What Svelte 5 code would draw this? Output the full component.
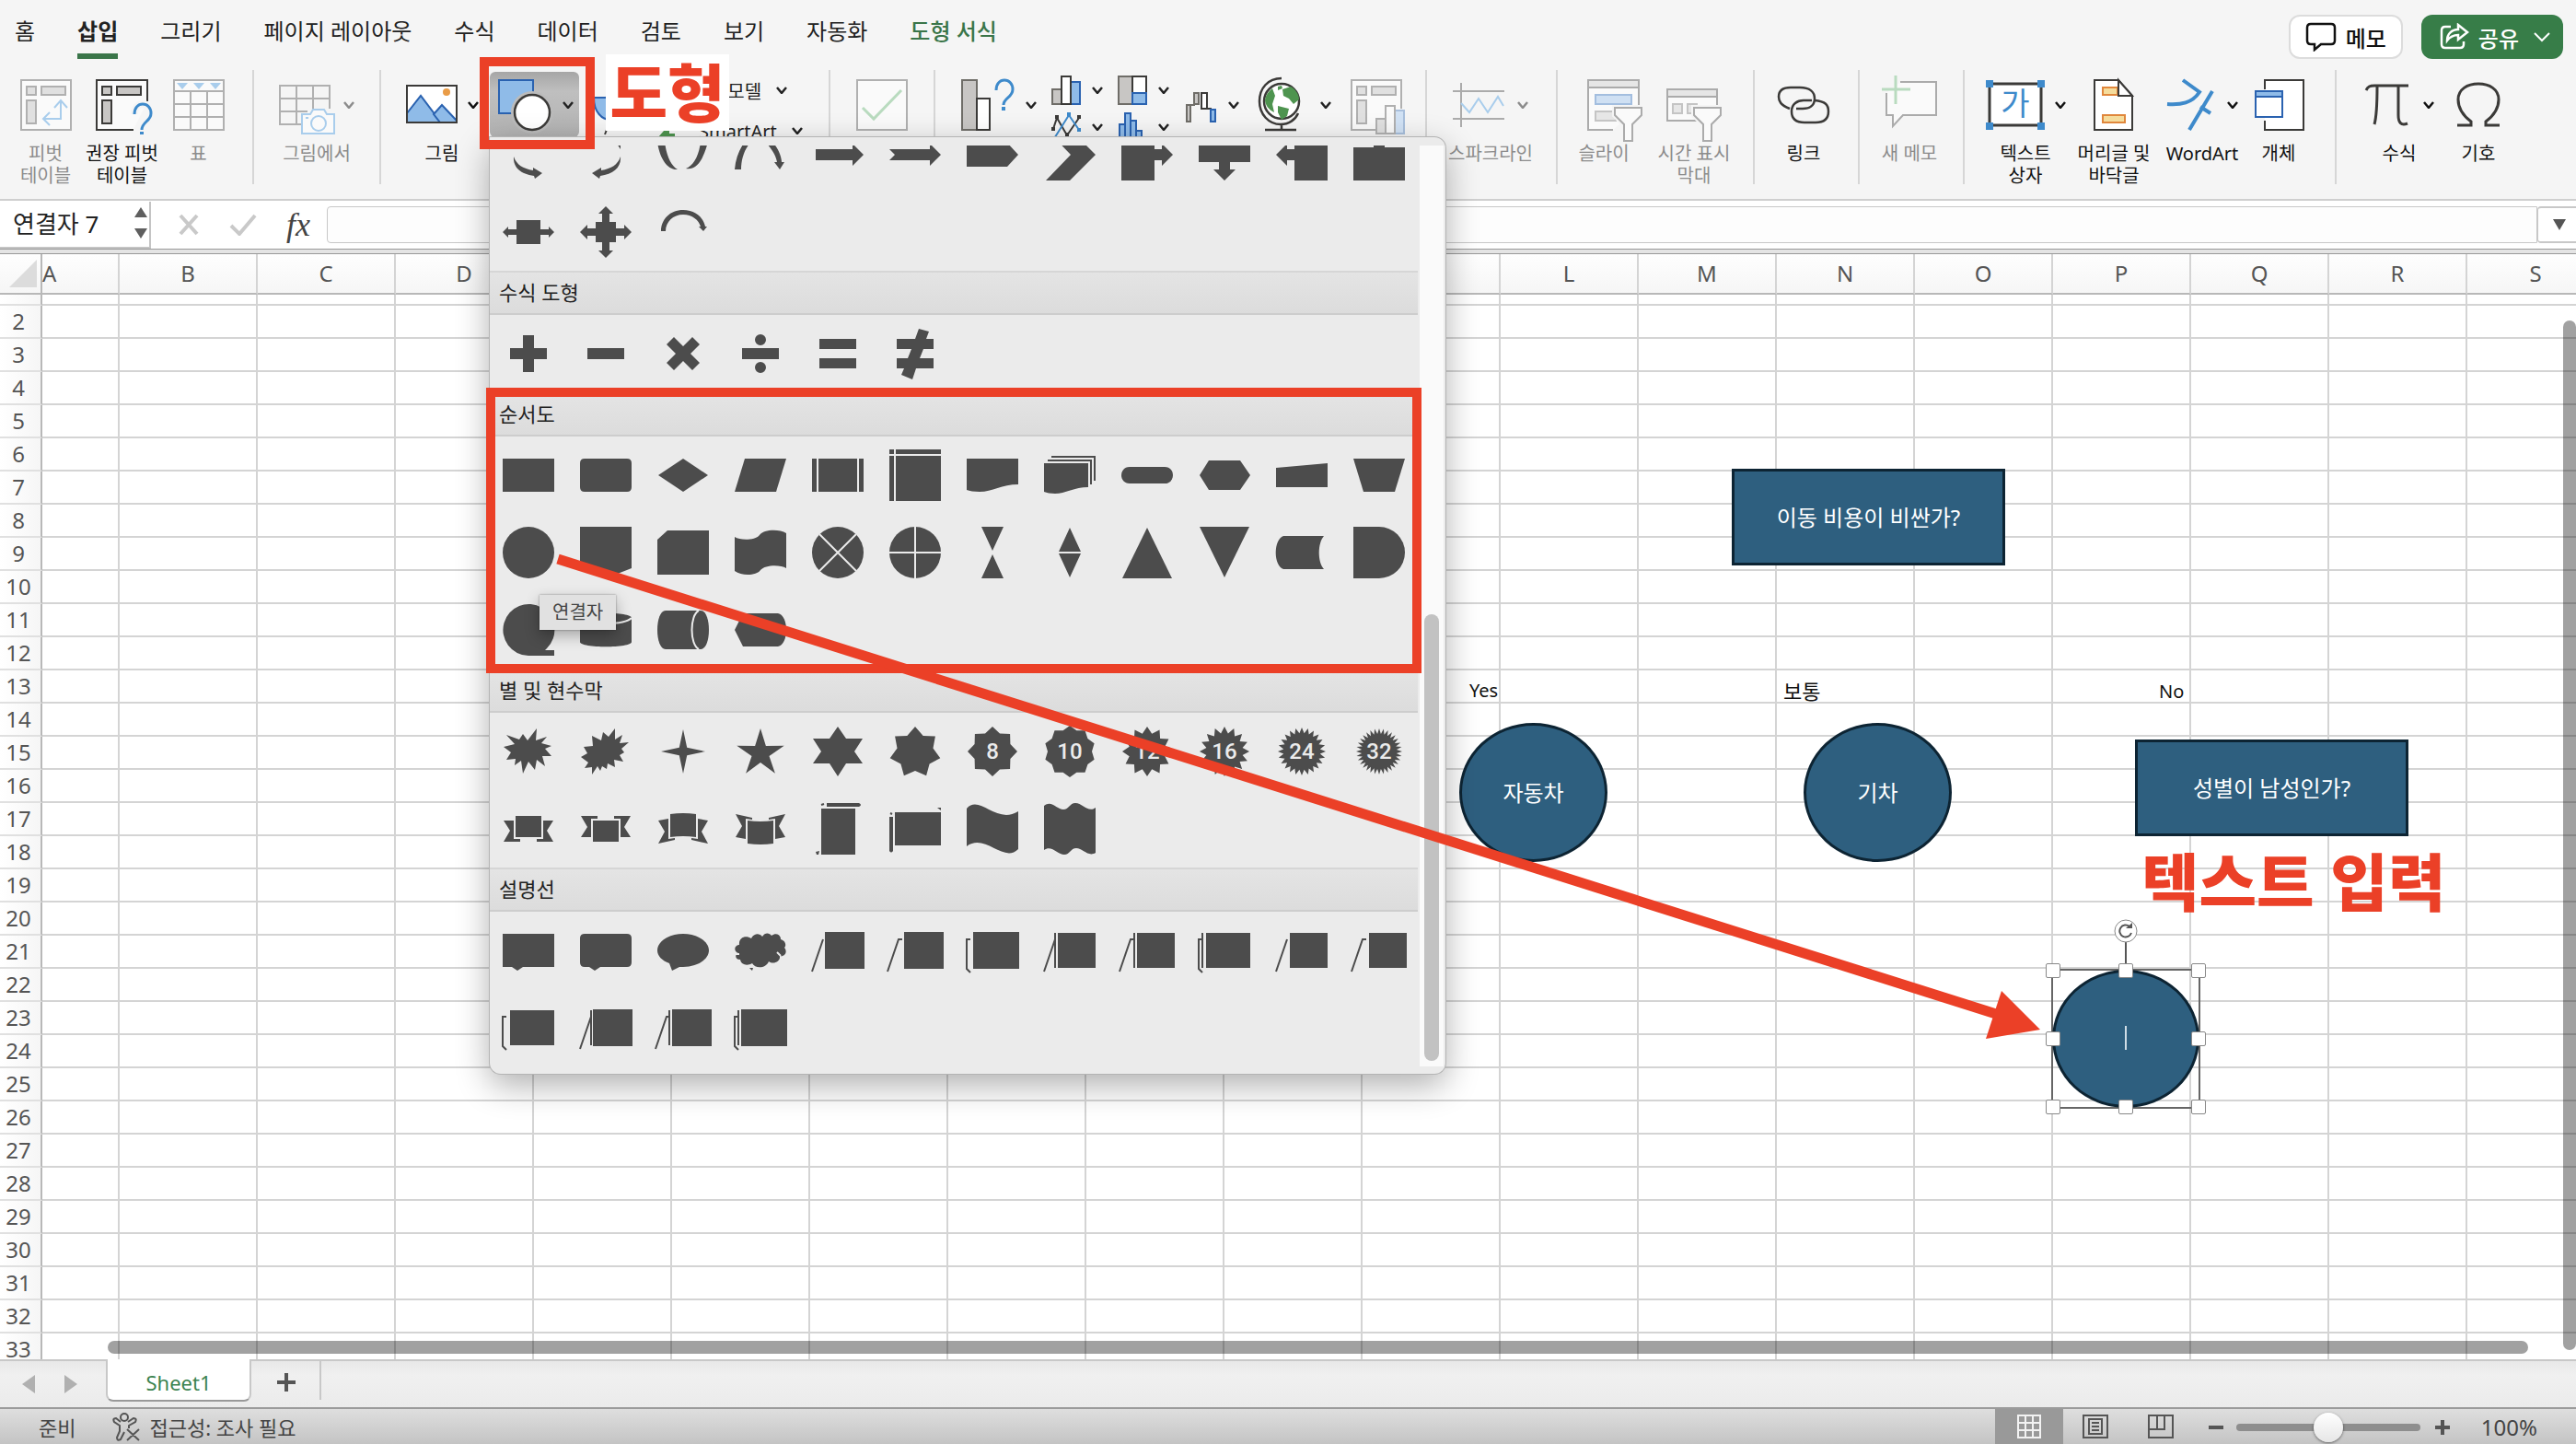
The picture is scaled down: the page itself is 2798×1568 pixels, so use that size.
<script lang="ts">
  type Shape = { d?: string; cut?: string; line?: string; text?: string };
  type Tool = { icon: string; w: number; iw: number; label: string; off?: boolean; chev?: boolean };

  const tabs = ["홈", "삽입", "그리기", "페이지 레이아웃", "수식", "데이터", "검토", "보기", "자동화", "도형 서식"];
  const columns = "ABCDEFGHIJKLMNOPQRS".split("");
  const rows = Array.from({ length: 33 }, (_, i) => i + 1);

  let activeTab = $state("삽입");
  let nameBox = $state("연결자 7");
  let formula = $state("");
  let zoom = $state(50);

  const pivotFrame = (s: string, f: string, outer: string) =>
    `<path d="${outer}" fill="#fafafa" stroke="${s}" stroke-width="2"/>
     <path d="M8 16h10v9H8zM24 16h26v9H24zM8 31h10v25H8z" fill="${f}" stroke="${s}" stroke-width="2"/>`;

  const funnel = (x: number, y: number) =>
    `<path d="M${x} ${y}h29v8l-10 10v18h-9v-18l-10-10z" fill="#fafafa" stroke="#f5f5f5" stroke-width="6"/>
     <path d="M${x} ${y}h29v8l-10 10v18h-9v-18l-10-10z" fill="#fafafa" stroke="#ababab" stroke-width="2"/>`;

  const icons: Record<string, string> = {
    pivot:
      pivotFrame("#b0b0b0", "#e0e0e0", "M2 9h54v54H2z") +
      `<path d="M27 51h18V32M33 44l-7 7 7 7M38 39l7-8 7 8" fill="none" stroke="#a9cdec" stroke-width="2"/>`,
    pivotHelp:
      pivotFrame("#3b3a38", "#c8c6c4", "M57 32V9H2v54h40") +
      `<path d="M43 46c0-7 4-11 9-11s9 4 9 10c0 9-10 9-10 19" fill="none" stroke="#f5f5f5" stroke-width="8"/>
       <path d="M43 46c0-7 4-11 9-11s9 4 9 10c0 9-10 9-10 18" fill="none" stroke="#3e8acb" stroke-width="3"/>
       <path d="M49 65h4v3h-4z" fill="#3e8acb"/>`,
    table: `<path d="M2 9h54v54H2z" fill="#fafafa" stroke="#b0b0b0" stroke-width="2"/>
      <path d="M2 21h54M2 35h54M2 49h54M20 21v42M38 21v42" stroke="#b0b0b0" stroke-width="2"/>
      <path d="M5 12h12l-6 7zM23 12h12l-6 7zM41 12h12l-6 7z" fill="#a9cdec"/>`,
    screenshot: `<path d="M24 57H1V15h54v25M1 29h54M1 43h30M19 15v42M37 15v25" fill="none" stroke="#b0b0b0" stroke-width="2"/>
      <path d="M25 46h9l3-5h12l3 5h8v21H25z" fill="#fafafa" stroke="#a9cdec" stroke-width="2"/>
      <circle cx="43" cy="56" r="8" fill="none" stroke="#a9cdec" stroke-width="2"/><path d="M29 49h3v2h-3z" fill="#a9cdec"/>`,
    picture: `<path d="M1 15h54v40H1z" fill="#fff"/>
      <path d="M1 45l15-19 22 29H1z" fill="#8fbbe8" stroke="#2a62b0" stroke-width="2"/>
      <path d="M30 46l9-10 16 17v2H37z" fill="#8fbbe8" stroke="#2a62b0" stroke-width="2"/>
      <circle cx="44" cy="22" r="4" fill="#e99c47"/><path d="M1 15h54v40H1z" fill="none" stroke="#3b3a38" stroke-width="2"/>`,
    shapes: `<path d="M1 9h37v36H1z" fill="#8fbbe8" stroke="#2a62b0" stroke-width="2"/>
      <circle cx="37" cy="44" r="23" fill="#bbb"/><circle cx="37" cy="44" r="19" fill="#fff" stroke="#3b3a38" stroke-width="2.5"/>`,
    hat: `<path d="M4 28h12c8 0 14-6 24-6v30H22c-9 0-18-8-18-24z" fill="#8fbbe8" stroke="#2a62b0" stroke-width="2"/>
      <path d="M16 68l3-8" stroke="#3b3a38" stroke-width="2"/>`,
    cube: `<path d="M2 8l14-6 14 6v16l-14 7-14-7z" fill="none" stroke="#3b3a38" stroke-width="2"/>`,
    smartart: `<path d="M0 23l12-14v10h6v4z" fill="#4e944f"/><path d="M14 23v9h17v-9M20 23h11M18 27h2M22 27h9" fill="none" stroke="#3b3a38" stroke-width="2"/>`,
    addin: `<path d="M1 9h54v54H1z" fill="#fafafa" stroke="#b0b0b0" stroke-width="2"/>
      <path d="M7 39l12 12 30-31" fill="none" stroke="#b9dbbf" stroke-width="3"/>`,
    chartHelp: `<path d="M1 9h16v54H1z" fill="#c8c6c4" stroke="#6f6d68" stroke-width="2"/>
      <path d="M17 29h14v34H17z" fill="#fff" stroke="#3b3a38" stroke-width="2"/>
      <path d="M38 20c0-7 4-11 9-11s9 4 9 10c0 9-10 9-10 17" fill="none" stroke="#3e8acb" stroke-width="3"/><path d="M44 38h4v4h-4z" fill="#3e8acb"/>`,
    column: `<path d="M1 15h10v16H1z" fill="#c8c6c4" stroke="#6f6d68" stroke-width="2"/><path d="M21 7h10v24H21z" fill="#8fbbe8" stroke="#2a62b0" stroke-width="2"/>
      <path d="M11 1h10v30H11z" fill="#fff" stroke="#3b3a38" stroke-width="2"/>`,
    treemap: `<path d="M1 1h15v30H1z" fill="#c8c6c4" stroke="#6f6d68" stroke-width="2"/><path d="M16 1h15v18H16z" fill="#fff" stroke="#3b3a38" stroke-width="2"/>
      <path d="M16 19h15v12H16z" fill="#8fbbe8" stroke="#2a62b0" stroke-width="2"/>`,
    line: `<path d="M2 18L6 6l11 19L30 6" fill="none" stroke="#3b3a38" stroke-width="2"/><path d="M0 16h4v4H0zM4 3h4v4H4zM15 22h4v4h-4zM28 3h4v4h-4z" fill="#3b3a38"/>
      <path d="M2 30L19 3l11 16" fill="none" stroke="#3e8acb" stroke-width="2"/><path d="M17 0h4v4h-4zM28 17h4v4h-4zM0 28h4v4H0z" fill="#3e8acb"/>`,
    histogram: `<path d="M2 13h6v19H2zM8 1h6v31H8zM14 9h6v23h-6zM20 20h6v12h-6z" fill="#8fbbe8" stroke="#2a62b0" stroke-width="2"/>`,
    waterfall: `<path d="M1 36h4v18H1zM9 23h5v12H9z" fill="#c8c6c4" stroke="#6f6d68" stroke-width="2"/><path d="M3 36h7" stroke="#6f6d68" stroke-width="2"/>
      <path d="M17 23h6v17h-6z" fill="#fff" stroke="#3b3a38" stroke-width="2"/><path d="M22 40h6" stroke="#3b3a38" stroke-width="2"/><path d="M27 41h5v13h-5z" fill="#8fbbe8" stroke="#2a62b0" stroke-width="2"/>`,
    globe: `<path d="M26 7C11 7 2 18 2 32s10 25 23 25c9 0 16-5 19-12M26 57v6M8 63h34" fill="none" stroke="#3b3a38" stroke-width="2.5"/>
      <circle cx="26" cy="32" r="19" fill="#fff" stroke="#3b3a38" stroke-width="2.5"/>
      <path d="M27 19l9-3c5 3 9 8 9 14l-6 5-5-6-6-3zM8 30c1-5 4-9 8-12l3 8-3 9 2 9c-6-3-10-8-10-14zM22 37l12 3-2 8-6 4-4-8zM22 16l4-1 1 3-5 2z" fill="#4e944f"/>`,
    pivotChart:
      pivotFrame("#b0b0b0", "#e0e0e0", "M56 40V9H2v54h26") +
      `<path d="M29 51h10v16H29z" fill="#e0e0e0" stroke="#b0b0b0" stroke-width="2"/><path d="M49 42h10v25H49z" fill="#d1e2f5" stroke="#a8bfdc" stroke-width="2"/>
       <path d="M39 37h10v30H39z" fill="#fafafa" stroke="#b0b0b0" stroke-width="2"/>`,
    sparkline: `<path d="M0 21h56M0 51h56M9 12v48" stroke="#ababab" stroke-width="2"/>
      <path d="M9 34l9 10 10-15 10 15L49 27l6 10" fill="none" stroke="#a9cdec" stroke-width="2"/>`,
    slicer:
      `<path d="M40 63H13V9h55v30" fill="#fafafa" stroke="#ababab" stroke-width="2"/><path d="M13 9h55v8H13z" fill="#e6e6e6" stroke="#ababab" stroke-width="2"/>
       <path d="M21 25h39v10H21z" fill="#cfe0f3" stroke="#a3bedf" stroke-width="2"/><path d="M21 43h22v10H21z" fill="#e6e6e6" stroke="#c4c4c4" stroke-width="2"/>` + funnel(42, 39),
    timeline:
      `<path d="M36 53H1V19h54v22" fill="#fafafa" stroke="#ababab" stroke-width="2"/><path d="M1 19h54v8H1z" fill="#e6e6e6" stroke="#ababab" stroke-width="2"/>
       <path d="M7 35h10v10H7zM23 35h10v10H23z" fill="#e6e6e6" stroke="#c4c4c4" stroke-width="2"/>` + funnel(30, 39),
    link: `<path d="M14 40C4 36 2 32 2 27c0-8 6-10 13-10h10c11 0 16 5 16 12 0 8-6 11-13 11h-7" fill="none" stroke="#3b3a38" stroke-width="2.5"/>
      <path d="M41 31c12 1 15 5 15 12 0 9-6 12-14 12H30c-10 0-14-5-14-12 0-8 6-12 13-12h9" fill="none" stroke="#3b3a38" stroke-width="2.5"/>`,
    newNote: `<path d="M20 11h39v36H23L12 59V47H5V23" fill="#fafafa" stroke="#ababab" stroke-width="2"/><path d="M15 4v31M0 19h31" stroke="#b9dbbf" stroke-width="3"/>`,
    textBox: `<path d="M5 13h56v45H5z" fill="#fff" stroke="#3b3a38" stroke-width="3"/>
      <path d="M1 9h8v8H1zM57 9h8v8h-8zM1 55h8v8H1zM57 55h8v8h-8z" fill="#3e8acb"/>
      <text x="33" y="47" font-size="34" text-anchor="middle" fill="#3e8acb">가</text>`,
    header: `<path d="M1 9h26l15 17v37H1z" fill="#fff" stroke="#3b3a38" stroke-width="2"/><path d="M26 17H10v8h16zM10 47h24v8H10z" fill="#f5dc9c" stroke="#e0873c" stroke-width="2"/>
      <path d="M27 9v17h15z" fill="#fff" stroke="#3b3a38" stroke-width="2"/>`,
    wordArt: `<path d="M18 9l18 13C28 34 16 36 1 35M50 21L25 63M37 38l11 7" fill="none" stroke="#3e8acb" stroke-width="4"/>`,
    object: `<path d="M14 19V9h42v54H14V53" fill="#fff" stroke="#3b3a38" stroke-width="2"/><path d="M4 21h29v28H4z" fill="#fff" stroke="#2a62b0" stroke-width="2"/>
      <path d="M4 21h29v6H4z" fill="#8fbbe8" stroke="#2a62b0" stroke-width="2"/>`,
    pi: `<path d="M2 20c2-4 4-5 9-5h37M14 16c0 14 0 30-3 41M37 16v31c0 8 3 12 10 9" fill="none" stroke="#3b3a38" stroke-width="3"/>`,
    omega: `<path d="M1 58h15v-4C8 48 2 40 2 30 2 19 12 13 24 13s22 6 22 17c0 10-6 18-14 24v4h15" fill="none" stroke="#3b3a38" stroke-width="3"/>`,
  };

  const leftGroups: { w: number; pad: number; tools: Tool[] }[] = [
    {
      w: 276,
      pad: 8,
      tools: [
        { icon: "pivot", iw: 58, w: 83, label: "피벗\n테이블", off: true },
        { icon: "pivotHelp", iw: 60, w: 83, label: "권장 피벗\n테이블" },
        { icon: "table", iw: 58, w: 83, label: "표", off: true },
      ],
    },
    { w: 138, pad: 26, tools: [{ icon: "screenshot", iw: 60, w: 84, label: "그림에서", off: true, chev: true }] },
  ];

  const rightGroups: { w: number; pad: number; tools: Tool[] }[] = [
    { w: 142, pad: 28, tools: [{ icon: "sparkline", iw: 60, w: 82, label: "스파크라인", off: true, chev: true }] },
    {
      w: 214,
      pad: 16,
      tools: [
        { icon: "slicer", iw: 60, w: 68, label: "슬라이", off: true },
        { icon: "timeline", iw: 60, w: 128, label: "시간 표시\n막대", off: true },
      ],
    },
    { w: 114, pad: 24, tools: [{ icon: "link", iw: 58, w: 58, label: "링크" }] },
    { w: 114, pad: 24, tools: [{ icon: "newNote", iw: 60, w: 60, label: "새 메모", off: true }] },
    {
      w: 404,
      pad: 22,
      tools: [
        { icon: "textBox", iw: 66, w: 88, label: "텍스트\n상자", chev: true },
        { icon: "header", iw: 44, w: 104, label: "머리글 및\n바닥글" },
        { icon: "wordArt", iw: 56, w: 88, label: "WordArt", chev: true },
        { icon: "object", iw: 58, w: 78, label: "개체" },
      ],
    },
    {
      w: 230,
      pad: 27,
      tools: [
        { icon: "pi", iw: 54, w: 82, label: "수식", chev: true },
        { icon: "omega", iw: 48, w: 90, label: "기호" },
      ],
    },
  ];

  // Shapes are drawn around the cell centre, so 0,0 is the middle of an 84px cell.
  function star(n: number, outer: number, inner: number, cy = 0) {
    const pts = [];
    for (let i = 0; i < n * 2; i++) {
      const r = i % 2 ? inner : outer;
      const a = (Math.PI * i) / n - Math.PI / 2;
      pts.push(`${(Math.cos(a) * r).toFixed(1)} ${(Math.sin(a) * r + cy).toFixed(1)}`);
    }
    return `M${pts.join("L")}Z`;
  }

  const badge = (n: number, outer: number, inner: number): Shape => ({ d: star(n, outer, inner), text: String(n) });
  const box = (x1: number, x2: number, h: number) => `M${x1} ${-h}H${x2}V${h}H${x1}Z`;
  const slash = "M-28 23L-16 -12";
  const bent = "M-30 23L-18 -12H-14";
  const bracket = "M-24 -12H-28V20L-24 24";
  const disc = "M-28 0A28 28 0 1 1 28 0A28 28 0 1 1 -28 0Z";

  const arrows: Shape[] = [
    { d: "M-16 2C-13 11 -6 15 5 17V14L15 20L7 26L6 23C-8 21 -17 14 -16 2Z" },
    { d: "M16 2C13 11 6 15 -5 17V14L-15 20L-7 26L-6 23C8 21 17 14 16 2ZM12 -12L16 -6V-12Z" },
    { d: "M-28 -14H-20C-18 2 -13 12 -6 16C-18 17 -26 2 -28 -14ZM27 -14H19C17 2 11 12 3 15C16 17 22 4 27 -14Z" },
    { d: "M-28 16C-27 4 -23 -6 -17 -14H-10C-18 -6 -21 6 -21 16ZM5 -14H13C20 -6 23 3 23 8H26L21 16L15 8H18C17 2 13 -6 5 -14Z" },
    { d: "M-24 -6H16V-12L28 0L16 12V6H-24Z" },
    { d: "M-28 -6H16V-12L28 0L16 12V6H-28L-22 0Z" },
    { d: "M-28 -13H16L28 0L16 13H-28Z" },
    { d: "M-26 -28H0L28 0L0 28H-26L1 0Z" },
    { d: "M-28 -28H8V-6H16V-12L28 0L16 12V6H8V28H-28Z" },
    { d: "M-28 -28H28V8H6V16H12L0 28L-12 16H-6V8H-28Z" },
    { d: "M28 -28H-8V-6H-16V-12L-28 0L-16 12V6H-8V28H28Z" },
    { d: "M0 -28L12 -16H6V-8H28V28H-28V-8H-6V-16H-12Z" },
    { d: "M-13 -13H13V-3H22V-6L28 0L22 6V3H13V13H-13V3H-22V6L-28 0L-22 -6V-3H-13Z" },
    { d: "M-11 -11H-4V-20H-8L0 -28L8 -20H4V-11H11V-4H20V-8L28 0L20 8V4H11V11H4V20H8L0 28L-8 20H-4V11H-11V4H-20V8L-28 0L-20 -8V-4H-11Z" },
    { d: "M-24 -1C-24 -14 -14 -24 0 -24C13 -24 22 -16 24 -6H26L22 -1L17 -6H19C17 -13 10 -19 0 -19C-11 -19 -19 -11 -19 -1Z" },
  ];

  const math: Shape[] = [
    { d: "M-6 -20H6V-6H20V6H6V20H-6V6H-20V-6H-6Z" },
    { d: "M-20 -6H20V6H-20Z" },
    { d: "M-10 -18L0 -8L10 -18L18 -10L8 0L18 10L10 18L0 8L-10 18L-18 10L-8 0L-18 -10Z" },
    { d: "M-20 -6H20V6H-20ZM-6 -15A6 6 0 1 1 6 -15A6 6 0 1 1 -6 -15ZM-6 15A6 6 0 1 1 6 15A6 6 0 1 1 -6 15Z" },
    { d: "M-20 -16H20V-5H-20ZM-20 5H20V16H-20Z" },
    { d: "M-20 -16H0L4 -27L15 -24L12 -16H20V-5H9L5 5H20V16H1L-3 28L-15 23L-12 16H-20V5H-8L-4 -5H-20Z" },
  ];

  const flowchart: Shape[] = [
    { d: box(-28, 28, 18) },
    { d: "M-23 -18H23Q28 -18 28 -13V13Q28 18 23 18H-23Q-28 18 -28 13V-13Q-28 -18 -23 -18Z" },
    { d: "M-27 0L0 -18L27 0L0 18Z" },
    { d: "M-17 -18H28L17 18H-28Z" },
    { d: box(-28, 28, 18), cut: "M-22 -18V18M22 -18V18" },
    { d: box(-28, 28, 28), cut: "M-22 -28V28M-28 -22H28" },
    { d: "M-28 -18H28V10C10 10 0 18 -14 18C-20 18 -25 17 -28 16Z" },
    { d: "M-28 -13H20V13C5 13 -5 20 -16 20C-21 20 -25 19 -28 18Z", line: "M-24 -16H23V10M-20 -20H27V6" },
    { d: "M-19 -9H19C31 -9 31 9 19 9H-19C-31 9 -31 -9 -19 -9Z" },
    { d: "M-27 0L-17 -16H17L28 0L17 16H-17Z" },
    { d: "M-28 -8L28 -13V13H-28Z" },
    { d: "M-28 -18H28L17 18H-17Z" },
    { d: disc },
    { d: "M-28 -28H28V17L0 28L-28 17Z" },
    { d: "M-28 -14L-17 -24H28V24H-28Z" },
    { d: "M-28 -17C-22 -13 -6 -13 -1 -19C3 -25 20 -26 28 -21V17C22 13 5 13 0 19C-4 25 -20 26 -28 20Z" },
    { d: disc, cut: "M-20 -20L20 20M20 -20L-20 20" },
    { d: disc, cut: "M0 -28V28M-28 0H28" },
    { d: "M-12 -28H12L0 -2ZM0 2L12 28H-12Z" },
    { d: "M0 -27L12 -1H-12ZM-12 1H12L0 27Z" },
    { d: "M0 -27L27 28H-27Z" },
    { d: "M-27 -28H27L0 27Z" },
    { d: "M-20 -18H24C17 -10 17 10 24 18H-20C-31 14 -31 -14 -20 -18Z" },
    { d: "M-28 -28H0A28 28 0 0 1 0 28H-28Z" },
    { d: "M0 28A28 28 0 1 1 20 20L18 22H28V28Z" },
    { d: "M-28 -13C-28 -20 28 -20 28 -13V13C28 20 -28 20 -28 13Z", cut: "M-28 -13C-20 -5 20 -5 28 -13" },
    { d: "M-19 -21H19C31 -21 31 21 19 21H-19C-31 21 -31 -21 -19 -21Z", cut: "M17 -21C7 -16 7 16 17 21" },
    { d: "M-28 0L-19 -18H19C31 -16 31 16 19 18H-19Z" },
  ];

  const stars: Shape[] = [
    { d: "M-24 -18L-10 -13L-6 -19L-1 -12L9 -25L8 -12L20 -16L14 -9L25 -6L18 -3L25 5L15 5L18 16L9 9L7 20L0 11L-6 24L-8 10L-15 15L-14 8L-24 9L-19 1L-27 -5L-15 -8Z" },
    { d: "M-15 -17L-5 -12L-3 -21L3 -16L10 -25L10 -13L18 -18L15 -9L25 -10L17 -3L20 1L15 4L19 11L9 9L10 17L2 13L1 19L-4 16L-6 21L-9 16L-15 25L-15 17L-23 18L-19 12L-27 6L-20 2L-24 -5L-14 -6Z" },
    { d: star(4, 24, 6) },
    { d: star(5, 27, 10, 2) },
    { d: "M0 -27L9 -14H27L18 0L27 13H9L0 27L-9 13H-27L-18 0L-27 -14H-9Z" },
    { d: star(7, 28, 20, 1) },
    badge(8, 27, 21),
    badge(10, 28, 24),
    badge(12, 27, 20),
    badge(16, 27, 20),
    badge(24, 26, 20),
    badge(32, 25, 19),
    { d: "M-14 -14H14V9H-14ZM-27 -9H-16V11H-9V14H-27L-20 2ZM27 -9H16V11H9V14H27L20 2Z" },
    { d: "M-14 -9H14V14H-14ZM-27 9H-16V-11H-9V-14H-27L-20 -2ZM27 9H16V-11H9V-14H27L20 -2Z" },
    { d: "M-14 -16Q0 -18 14 -16V9Q0 7 -14 9ZM-27 -9L-16 -11V11L-9 10V12L-27 16L-20 3ZM27 -9L16 -11V11L9 10V12L27 16L20 3Z" },
    { d: "M-14 -9Q0 -7 14 -9V16Q0 18 -14 16ZM-27 9L-16 11V-11L-9 -10V-12L-27 -16L-20 -3ZM27 9L16 11V-11L9 -10V-12L27 -16L20 -3Z" },
    { d: "M-18 -22H19V28H-18ZM-12 -28H23Q27 -26 23 -24H-12ZM-24 25L-20 24L-21 28H-23Z", line: "M-18 -26L-15 -27" },
    { d: "M-22 -18H28V18H-22ZM-28 -13H-24V24Q-26 27 -28 24ZM24 -23H28V-20Z", line: "M-27 -17L-25 -16" },
    { d: "M-28 -22C-14 -38 4 -4 28 -19V22C12 38 -8 4 -28 19Z" },
    { d: "M-28 -25C-20 -32 -14 -21 -7 -21C-1 -21 0 -28 6 -28C14 -28 20 -17 28 -23V26C20 31 14 21 7 21C1 21 0 28 -6 28C-13 28 -20 17 -28 23Z" },
  ];

  const callouts: Shape[] = [
    { d: "M-28 -18H28V18H-6L-12 22L-18 18H-28Z" },
    { d: "M-23 -18H23Q28 -18 28 -13V13Q28 18 23 18H-6L-12 22L-18 18H-23Q-28 18 -28 13V-13Q-28 -18 -23 -18Z" },
    { d: "M-15 14C-23 11 -28 6 -28 0C-28 -10 -15 -18 0 -18S28 -10 28 0S15 18 0 18H-4L-12 22Z" },
    { d: "M-23 -6C-24 -14 -16 -17 -10 -13C-7 -19 -1 -19 2 -15C5 -20 10 -19 12 -16C17 -20 22 -17 22 -12C28 -10 28 -5 26 -3C30 2 26 7 21 6C22 12 14 16 9 12C6 20 -6 20 -9 14C-14 17 -21 16 -22 10C-28 10 -28 4 -24 3C-30 1 -28 -6 -23 -6ZM-12 19H-8L-9 22Z", cut: "M18 2L22 6M-28 4H-23" },
    { d: box(-14, 29, 20), line: slash },
    { d: box(-12, 31, 20), line: bent },
    { d: box(-21, 29, 20), line: bracket },
    { d: box(-13, 28, 19), line: slash + "M-16 -19V19" },
    { d: box(-11, 30, 19), line: bent + "M-14 -19V19" },
    { d: box(-20, 28, 19), line: bracket + "M-24 -19V19" },
    { d: box(-13, 28, 19), line: slash },
    { d: box(-11, 30, 19), line: bent },
    { d: box(-20, 28, 19), line: bracket },
    { d: box(-14, 29, 20), line: slash + "M-16 -19V19" },
    { d: box(-12, 31, 20), line: bent + "M-15 -19V19" },
    { d: box(-21, 29, 20), line: bracket + "M-24 -19V19" },
  ];

  const sections = [
    { title: "", shapes: arrows },
    { title: "수식 도형", shapes: math },
    { title: "순서도", shapes: flowchart },
    { title: "별 및 현수막", shapes: stars },
    { title: "설명선", shapes: callouts },
  ];

  // Drawing objects, placed in sheet coordinates.
  const nodes = [
    { kind: "process", text: "이동 비용이 비싼가?", x: 1881, y: 233, w: 297, h: 105 },
    { kind: "connector", text: "자동차", x: 1585, y: 509, w: 161, h: 151 },
    { kind: "connector", text: "기차", x: 1959, y: 509, w: 161, h: 151 },
    { kind: "process", text: "성별이 남성인가?", x: 2319, y: 527, w: 297, h: 105 },
    { kind: "note", text: "Yes", x: 1596, y: 460, w: 60, h: 28 },
    { kind: "note", text: "보통", x: 1937, y: 460, w: 60, h: 28 },
    { kind: "note", text: "No", x: 2345, y: 461, w: 60, h: 28 },
  ];
  const handles = [[0, 0], [50, 0], [100, 0], [0, 50], [100, 50], [0, 100], [50, 100], [100, 100]];
</script>

{#snippet chevron()}
  <svg class="chevron" width="12" height="8" viewBox="0 0 12 8"><path d="M1 1l5 6 5-6" fill="none" stroke="currentColor" stroke-width="2.5" /></svg>
{/snippet}

{#snippet icon(name: string, w: number, h = 72)}
  <svg class="icon" width={w} height={h} viewBox="0 0 {w} {h}">{@html icons[name]}</svg>
{/snippet}

{#snippet toolButton(tool: Tool)}
  <button class="tool" class:off={tool.off} style:width="{tool.w}px">
    <span class="tool-top">
      {@render icon(tool.icon, tool.iw)}
      {#if tool.chev}{@render chevron()}{/if}
    </span>
    <span class="tool-label">{tool.label}</span>
  </button>
{/snippet}

<div class="app">
  <header class="tab-bar">
    <nav>
      {#each tabs as tab}
        <button class="tab" class:active={tab === activeTab} class:context={tab === "도형 서식"} onclick={() => (activeTab = tab)}>{tab}</button>
      {/each}
    </nav>
    <div class="actions">
      <button class="memo">
        <svg width="34" height="32" viewBox="0 0 34 32"><path d="M6 2h22q4 0 4 4v14q0 4-4 4H17l-7 6v-6H6q-4 0-4-4V6q0-4 4-4z" fill="none" stroke="#111" stroke-width="2.5" /></svg>
        메모
      </button>
      <button class="share">
        <svg width="32" height="30" viewBox="0 0 32 30">
          <path d="M12 4H6q-4 0-4 4v15q0 4 4 4h16q4 0 4-4v-3" fill="none" stroke="#fff" stroke-width="2.5" />
          <path d="M20 2l10 8-10 8v-5c-6 0-9 2-12 6 0-7 5-12 12-12z" fill="none" stroke="#fff" stroke-width="2.5" />
        </svg>
        공유
        <svg class="share-chev" width="18" height="12" viewBox="0 0 18 12"><path d="M1 2l8 8 8-8" fill="none" stroke="#fff" stroke-width="2" /></svg>
      </button>
    </div>
  </header>

  <div class="ribbon">
    {#each leftGroups as group}
      <div class="group" style:width="{group.w}px" style:padding-left="{group.pad}px">
        {#each group.tools as tool}{@render toolButton(tool)}{/each}
      </div>
    {/each}

    <div class="group illustrations">
      {@render toolButton({ icon: "picture", iw: 57, w: 80, label: "그림", chev: true })}
      <div class="shape-picker">
        <button class="shape-button" aria-label="도형" aria-expanded="true">
          {@render icon("shapes", 58)}
          {@render chevron()}
        </button>

        <div class="menu">
          <div class="menu-scroll">
            {#each sections as section}
              {#if section.title}<h3>{section.title}</h3>{/if}
              <div class="shape-grid">
                {#each section.shapes as shape}
                  <button class="shape" aria-label={section.title || "블록 화살표"}>
                    <svg width="84" height="84" viewBox="-42 -42 84 84">
                      <path class="fill" d={shape.d} />
                      {#if shape.cut}<path class="cut" d={shape.cut} />{/if}
                      {#if shape.line}<path class="line" d={shape.line} />{/if}
                      {#if shape.text}<text y="8">{shape.text}</text>{/if}
                    </svg>
                  </button>
                {/each}
              </div>
            {/each}
          </div>
          <div class="menu-track"><div class="menu-thumb"></div></div>
          <div class="tooltip" role="tooltip">연결자</div>
        </div>
      </div>
      <button class="bare" aria-label="아이콘">{@render icon("hat", 60)}</button>
      <div class="stack">
        <button>{@render icon("cube", 32, 32)}<span>3D 모델</span>{@render chevron()}</button>
        <button>{@render icon("smartart", 32, 32)}<span>SmartArt</span>{@render chevron()}</button>
      </div>
    </div>

    <div class="group addins"><button class="bare" aria-label="추가 기능">{@render icon("addin", 58)}</button></div>

    <div class="group charts">
      <button class="bare" aria-label="추천 차트">{@render icon("chartHelp", 60)}{@render chevron()}</button>
      <div class="chart-grid">
        {#each ["column", "treemap", "line", "histogram"] as name}
          <button class="bare" aria-label={name}>{@render icon(name, 32, 32)}{@render chevron()}</button>
        {/each}
      </div>
      <button class="bare" aria-label="폭포">{@render icon("waterfall", 36)}{@render chevron()}</button>
      <button class="bare" aria-label="지도">{@render icon("globe", 58)}{@render chevron()}</button>
      <button class="bare" aria-label="피벗 차트">{@render icon("pivotChart", 60)}</button>
    </div>

    {#each rightGroups as group}
      <div class="group" style:width="{group.w}px" style:padding-left="{group.pad}px">
        {#each group.tools as tool}{@render toolButton(tool)}{/each}
      </div>
    {/each}
  </div>

  <div class="formula-bar">
    <div class="name-box">
      <input aria-label="이름 상자" bind:value={nameBox} />
      <svg width="14" height="34" viewBox="0 0 14 34"><path d="M7 0l7 11H0zM0 23h14L7 34z" fill="#5f5f5f" /></svg>
    </div>
    <button class="fx-cancel" aria-label="취소"><svg width="24" height="24" viewBox="0 0 24 24"><path d="M3 2l18 20M21 2L3 22" stroke="#c9c9c9" stroke-width="4" /></svg></button>
    <button class="fx-ok" aria-label="입력"><svg width="30" height="24" viewBox="0 0 30 24"><path d="M2 13l9 9L28 2" fill="none" stroke="#c9c9c9" stroke-width="4" /></svg></button>
    <button class="fx">fx</button>
    <input class="formula" aria-label="수식 입력줄" bind:value={formula} />
    <button class="expand" aria-label="수식 입력줄 확장"><svg width="14" height="12" viewBox="0 0 14 12"><path d="M0 0h14L7 12z" fill="#555" /></svg></button>
  </div>

  <main class="sheet">
    <table>
      <colgroup>
        <col class="col-head" />
        {#each columns as c}<col class={c === "A" ? "col-first" : "col"} />{/each}
      </colgroup>
      <thead>
        <tr>
          <th class="corner"><svg width="30" height="30" viewBox="0 0 30 30"><path d="M30 0v30H0z" fill="#dcdcdc" /></svg></th>
          {#each columns as c}<th class:first={c === "A"}>{c}</th>{/each}
        </tr>
      </thead>
      <tbody>
        {#each rows as r}
          <tr class:clipped={r === 1}>
            <th>{r === 1 ? "" : r}</th>
            {#each columns as _}<td></td>{/each}
          </tr>
        {/each}
      </tbody>
    </table>

    {#each nodes as node}
      <div
        class="node {node.kind}"
        class:latin={/^\w+$/.test(node.text)}
        style:left="{node.x}px"
        style:top="{node.y}px"
        style:width="{node.w}px"
        style:height="{node.h}px"
      >{node.text}</div>
    {/each}

    <div class="selection">
      <div class="node connector"><i class="caret"></i></div>
      <div class="stem"></div>
      <svg class="rotate" width="28" height="28" viewBox="0 0 28 28">
        <circle cx="14" cy="14" r="12" fill="#fff" stroke="#888" stroke-width="1" />
        <path d="M18 9a6.500 6.500 0 1 0 2 7" fill="none" stroke="#555" stroke-width="2" /><path d="M14 11h7V5z" fill="#555" />
      </svg>
      {#each handles as [hx, hy]}<i class="handle" style:left="{hx}%" style:top="{hy}%"></i>{/each}
    </div>

    <div class="scroll-x"></div>
    <div class="scroll-y"></div>
  </main>

  <div class="sheet-bar">
    <button class="nav" aria-label="이전 시트"><svg width="14" height="20" viewBox="0 0 14 20"><path d="M14 0v20L0 10z" fill="#b0b0b0" /></svg></button>
    <button class="nav" aria-label="다음 시트"><svg width="14" height="20" viewBox="0 0 14 20"><path d="M0 0v20l14-10z" fill="#b0b0b0" /></svg></button>
    <button class="sheet-tab">Sheet1</button>
    <button class="add-sheet" aria-label="새 시트"><svg width="20" height="20" viewBox="0 0 20 20"><path d="M10 0v20M0 10h20" stroke="#555" stroke-width="4" /></svg></button>
  </div>

  <footer class="status">
    <span>준비</span>
    <button class="access">
      <svg width="32" height="32" viewBox="0 0 32 32" fill="none" stroke="#555" stroke-width="2">
        <circle cx="13" cy="5" r="4" />
        <path d="M9 10L4 6Q0 6 2 10l6 4v6L5 27q0 4 4 2l4-8M17 10l6-4q4 0 2 4l-7 4v3M16 18l13 12M29 18L16 30" />
      </svg>
      접근성: 조사 필요
    </button>
    <div class="views">
      <button class="view on" aria-label="기본"><svg width="26" height="26" viewBox="0 0 26 26" fill="none" stroke="#f2f2f2" stroke-width="2"><path d="M1 1h24v24H1zM1 9h24M1 17h24M9 1v24M17 1v24" /></svg></button>
      <button class="view" aria-label="페이지 레이아웃"><svg width="28" height="26" viewBox="0 0 28 26" fill="none" stroke="#555" stroke-width="2"><path d="M1 1h26v24H1zM7 5h14v16H7zM10 9h8M10 13h8M10 17h8" /></svg></button>
      <button class="view" aria-label="페이지 나누기"><svg width="28" height="26" viewBox="0 0 28 26" fill="none" stroke="#555" stroke-width="2"><path d="M1 1h26v24H1zM1 16h17V1M10 1v15" /></svg></button>
    </div>
    <button class="step" aria-label="축소"><svg width="16" height="16" viewBox="0 0 16 16"><path d="M0 8h16" stroke="#555" stroke-width="4" /></svg></button>
    <input class="zoom" type="range" min="0" max="100" aria-label="확대/축소" bind:value={zoom} />
    <button class="step" aria-label="확대"><svg width="16" height="16" viewBox="0 0 16 16"><path d="M0 8h16M8 0v16" stroke="#555" stroke-width="4" /></svg></button>
    <span class="percent">100%</span>
  </footer>

  <div class="markup">
    <span class="caption boxed">도형</span>
    <span class="caption enter">텍스트 입력</span>
    <svg width="2798" height="1568" viewBox="0 0 2798 1568">
      <g fill="none" stroke="#eb4027">
        <path d="M526 67h115v90H526z" stroke-width="10" />
        <path d="M533 426h1006v300H533z" stroke-width="10" />
        <path d="M606 607l1562 494" stroke-width="11" />
      </g>
      <path d="M2174 1076l42 42-59 10z" fill="#eb4027" />
    </svg>
  </div>
</div>

<style>
  :global(body) {
    margin: 0;
    overflow: hidden;
  }

  .app {
    position: relative;
    display: flex;
    flex-direction: column;
    height: 100vh;
    background: #f5f5f5;
    color: #222;
    font-family: "Noto Sans", "Noto Sans CJK KR", sans-serif;
    font-size: 24px;
  }

  button,
  input {
    margin: 0;
    padding: 0;
    border: 0;
    background: none;
    color: inherit;
    font: inherit;
    outline: none;
  }

  svg {
    display: block;
    flex: none;
  }

  .icon {
    overflow: visible;
  }

  .tab-bar {
    display: flex;
    justify-content: space-between;
    height: 72px;
  }

  nav {
    display: flex;
    gap: 46px;
    padding-left: 16px;
  }

  .tab {
    height: 64px;
    padding-top: 10px;
    box-sizing: border-box;
    border-bottom: 6px solid transparent;
    line-height: 48px;
    white-space: nowrap;
  }

  .tab.active {
    font-weight: 700;
    border-image: linear-gradient(#3a7549, #3a7549) 1;
  }

  .tab.context {
    color: #3a7549;
    font-weight: 500;
  }

  .actions {
    display: flex;
    gap: 20px;
    padding: 16px 14px 0 0;
    font-weight: 500;
  }

  .memo,
  .share {
    display: flex;
    align-items: center;
    gap: 10px;
    height: 48px;
    box-sizing: border-box;
    border-radius: 12px;
    color: #111;
  }

  .memo {
    padding: 0 16px;
    border: 2px solid #dcdcdc;
    background: #fff;
  }

  .share {
    padding: 0 14px 0 20px;
    background: #377d48;
    color: #fff;
  }

  .share-chev {
    margin-left: 6px;
  }

  .ribbon {
    display: flex;
    height: 144px;
    border-bottom: 2px solid #cfcfcf;
    font-size: 20px;
  }

  .group {
    display: flex;
    flex: none;
    align-items: flex-start;
    height: 124px;
    margin-top: 4px;
    padding-top: 2px;
    box-sizing: border-box;
    border-right: 2px solid #d6d6d6;
  }

  .group:last-child {
    border-right: 0;
  }

  .tool {
    display: flex;
    flex: none;
    flex-direction: column;
    align-items: center;
    gap: 5px;
    color: #111;
  }

  .tool.off {
    color: #8c8c8c;
  }

  .tool-top,
  .bare {
    display: flex;
    align-items: center;
    gap: 10px;
  }

  .tool-label {
    line-height: 24px;
    text-align: center;
    white-space: pre;
  }

  .illustrations {
    width: 488px;
    padding-left: 26px;
  }

  .shape-picker {
    position: relative;
    margin: 0 12px;
  }

  .shape-button {
    display: flex;
    align-items: center;
    gap: 12px;
    width: 97px;
    height: 71px;
    padding-left: 9px;
    box-sizing: border-box;
    border-radius: 6px;
    background: linear-gradient(#a6a6a6, #bfbfbf 30%, #b2b2b2);
  }

  .stack {
    padding-left: 14px;
    margin-top: -2px;
  }

  .stack button {
    display: flex;
    align-items: center;
    gap: 12px;
    height: 44px;
  }

  .stack .chevron,
  .stack span {
    margin-right: 4px;
  }

  .addins {
    width: 114px;
    padding-left: 28px;
  }

  .charts {
    width: 534px;
    padding-left: 28px;
  }

  .chart-grid {
    display: grid;
    grid-template-columns: 72px 72px;
    grid-template-rows: 40px 40px;
    margin: 0 2px 0 16px;
  }

  .chart-grid .bare {
    gap: 12px;
  }

  .charts > .bare + .bare {
    margin-left: 20px;
  }

  .menu {
    position: absolute;
    top: 71px;
    left: 0;
    z-index: 5;
    display: flex;
    width: 1038px;
    padding: 9px 2px 8px 0;
    box-sizing: border-box;
    border-radius: 0 12px 12px 12px;
    background: #ebebeb;
    box-shadow: 0 0 0 1px #b4b4b4, 0 12px 36px rgba(0, 0, 0, 0.32);
  }

  .menu-scroll {
    display: flex;
    flex: 1;
    flex-direction: column;
    justify-content: flex-end;
    height: 1000px;
    overflow: hidden;
  }

  h3 {
    flex: none;
    height: 48px;
    margin: 0 2px 0 0;
    padding-left: 10px;
    box-sizing: border-box;
    border-top: 2px solid #d6d6d6;
    border-bottom: 2px solid #cdcdcd;
    background: linear-gradient(#e4e4e4, #dcdcdc);
    font-size: 22px;
    font-weight: 400;
    line-height: 42px;
  }

  .shape-grid {
    display: grid;
    flex: none;
    grid-template-columns: repeat(12, 84px);
  }

  .shape .fill {
    fill: #4c4c4c;
  }

  .shape .cut {
    fill: none;
    stroke: #ebebeb;
    stroke-width: 2;
  }

  .shape .line {
    fill: none;
    stroke: #4c4c4c;
    stroke-width: 2;
  }

  .shape text {
    fill: #ebebeb;
    font-family: Roboto, sans-serif;
    font-size: 24px;
    font-weight: 500;
    text-anchor: middle;
  }

  .menu-track {
    display: flex;
    align-items: flex-end;
    justify-content: center;
    width: 26px;
    padding-bottom: 6px;
    box-sizing: border-box;
    background: #fafafa;
  }

  .menu-thumb {
    width: 16px;
    height: 485px;
    border-radius: 8px;
    background: #c2c2c2;
  }

  .tooltip {
    position: absolute;
    top: 497px;
    left: 54px;
    padding: 0 14px;
    background: #e1e1e1;
    box-shadow: 0 0 2px rgba(0, 0, 0, 0.4), 0 6px 16px rgba(0, 0, 0, 0.3);
    color: #444;
    line-height: 38px;
  }

  .formula-bar {
    display: flex;
    align-items: center;
    height: 58px;
    padding-bottom: 6px;
    box-sizing: border-box;
    background: linear-gradient(#999, #999) 0 52px / 100% 1px no-repeat, linear-gradient(#999, #999) 0 57px / 100% 1px no-repeat,
      linear-gradient(#fff 52px, #e4e4e4 52px);
  }

  .name-box {
    display: flex;
    align-items: center;
    width: 164px;
    height: 51px;
    padding: 0 2px 2px 14px;
    box-sizing: border-box;
    border-right: 2px solid #c4c4c4;
    border-bottom: 2px solid #c4c4c4;
    font-size: 26px;
  }

  .name-box input {
    flex: 1;
    min-width: 0;
  }

  .fx-cancel {
    margin-left: 29px;
  }

  .fx-ok {
    margin-left: 32px;
  }

  .fx {
    margin: 0 18px 0 32px;
    color: #444;
    font-family: "Liberation Serif", serif;
    font-size: 36px;
    font-style: italic;
    line-height: 40px;
  }

  .formula {
    flex: 1;
    height: 40px;
    padding: 0 8px;
    box-sizing: border-box;
    border: 1px solid #c8c8c8;
    border-radius: 4px 0 0 4px;
    background: #fdfdfd;
  }

  .expand {
    display: flex;
    align-items: center;
    justify-content: center;
    width: 42px;
    height: 40px;
    padding-left: 4px;
    box-sizing: border-box;
    border: 1px solid #c8c8c8;
    border-width: 2px 0 2px 1px;
    border-radius: 4px 0 0 4px;
    background: #fff;
  }

  .sheet {
    position: relative;
    flex: 1;
    min-height: 0;
    overflow: hidden;
    background: #fff;
  }

  table {
    width: 2830px;
    table-layout: fixed;
    border-collapse: separate;
    border-spacing: 0;
  }

  .col-head {
    width: 46px;
  }

  .col-first {
    width: 84px;
  }

  .col {
    width: 150px;
  }

  th,
  td {
    height: 36px;
    padding: 0;
    box-sizing: border-box;
    border-right: 2px solid #d4d4d4;
    border-bottom: 2px solid #d4d4d4;
  }

  th {
    color: #555;
    font-weight: 400;
    line-height: 30px;
  }

  thead th {
    height: 44px;
    border-bottom-color: #b8b8b8;
    background: linear-gradient(#fefefe, #f6f6f6);
  }

  thead th.first {
    text-align: left;
  }

  thead .corner {
    border-right-color: #b8b8b8;
  }

  .corner svg {
    margin-left: 10px;
  }

  tbody th {
    padding-right: 4px;
    border-right-color: #b8b8b8;
    border-bottom-color: #e0e0e0;
    background: linear-gradient(90deg, #fff, #f6f6f6);
  }

  .clipped th,
  .clipped td {
    height: 12px;
    line-height: 8px;
  }

  .node {
    position: absolute;
    display: flex;
    align-items: center;
    justify-content: center;
    padding-bottom: 2px;
    box-sizing: border-box;
    color: #fff;
    white-space: nowrap;
  }

  .process,
  .connector {
    border: 3px solid #0d2433;
    background: #2e5f7f;
  }

  .connector {
    border-radius: 50%;
  }

  .note {
    justify-content: flex-start;
    color: #111;
    font-size: 22px;
  }

  .note.latin {
    font-size: 20px;
  }

  .selection {
    position: absolute;
    top: 776px;
    left: 2228px;
    width: 162px;
    height: 152px;
    box-sizing: border-box;
    border: 2px solid #666;
  }

  .selection .node {
    inset: -1px;
  }

  .caret {
    width: 2px;
    height: 26px;
    background: #cfdde6;
  }

  .stem {
    position: absolute;
    top: -34px;
    left: 50%;
    width: 2px;
    height: 34px;
    margin-left: -1px;
    background: #555;
  }

  .rotate {
    position: absolute;
    top: -57px;
    left: 50%;
    margin-left: -14px;
  }

  .handle {
    position: absolute;
    width: 14px;
    height: 14px;
    margin: -8px 0 0 -8px;
    border: 1px solid #888;
    border-radius: 2px;
    background: #fff;
  }

  .scroll-x,
  .scroll-y {
    position: absolute;
    border-radius: 7px;
    background: rgba(0, 0, 0, 0.37);
  }

  .scroll-x {
    right: 52px;
    bottom: 6px;
    left: 117px;
    height: 14px;
  }

  .scroll-y {
    top: 72px;
    right: 0;
    bottom: 10px;
    width: 14px;
  }

  .sheet-bar {
    display: flex;
    align-items: center;
    height: 52px;
    box-sizing: border-box;
    border-top: 2px solid #c8c8c8;
    background: linear-gradient(#e8e8e8, #f0f0f0 30%, #ebebeb);
  }

  .nav {
    padding: 0 8px 0 24px;
  }

  .nav + .nav {
    padding-right: 31px;
  }

  .sheet-tab {
    align-self: flex-start;
    width: 158px;
    height: 46px;
    margin-top: -2px;
    box-sizing: border-box;
    border: 2px solid #c8c8c8;
    border-width: 0 2px 2px;
    border-bottom-color: #999;
    border-radius: 0 0 8px 8px;
    background: #fff;
    color: #3c8350;
    font-size: 22px;
    line-height: 50px;
  }

  .add-sheet {
    align-self: flex-start;
    height: 42px;
    padding: 4px 26px 0 28px;
    border-right: 2px solid #c8c8c8;
  }

  .status {
    display: flex;
    align-items: center;
    height: 40px;
    padding: 2px 42px 0 42px;
    box-sizing: border-box;
    border-top: 2px solid #9b9b9b;
    background: linear-gradient(#dedede, #c4c4c4);
    color: #444;
    font-size: 22px;
    line-height: 36px;
  }

  .access {
    display: flex;
    align-items: center;
    gap: 8px;
    margin-left: 40px;
  }

  .views {
    display: flex;
    align-self: stretch;
    margin-top: -2px;
    margin-left: auto;
  }

  .view {
    display: flex;
    align-items: center;
    justify-content: center;
    width: 71px;
  }

  .view.on {
    width: 74px;
    background: #999;
  }

  .step {
    margin: 0 14px 0 16px;
  }

  .zoom {
    width: 200px;
    height: 32px;
    appearance: none;
  }

  .zoom::-webkit-slider-runnable-track {
    height: 8px;
    border-radius: 4px;
    background: #8e8e8e;
  }

  .zoom::-webkit-slider-thumb {
    width: 32px;
    height: 32px;
    margin-top: -12px;
    appearance: none;
    border-radius: 50%;
    background: linear-gradient(#fff, #e6e6e6);
    box-shadow: 0 1px 3px rgba(0, 0, 0, 0.5);
  }

  .percent {
    margin-left: 20px;
    font-size: 24px;
  }

  .markup {
    position: absolute;
    inset: 0;
    z-index: 10;
    overflow: hidden;
    pointer-events: none;
  }

  .markup svg {
    position: absolute;
    top: 0;
    left: 0;
  }

  .caption {
    position: absolute;
    color: #eb4027;
    font-size: 68px;
    font-weight: 900;
    line-height: 83px;
    white-space: nowrap;
  }

  .boxed {
    top: 59px;
    left: 658px;
    width: 134px;
    background: #fff;
    text-align: center;
  }

  .enter {
    top: 916px;
    left: 2326px;
  }
</style>
